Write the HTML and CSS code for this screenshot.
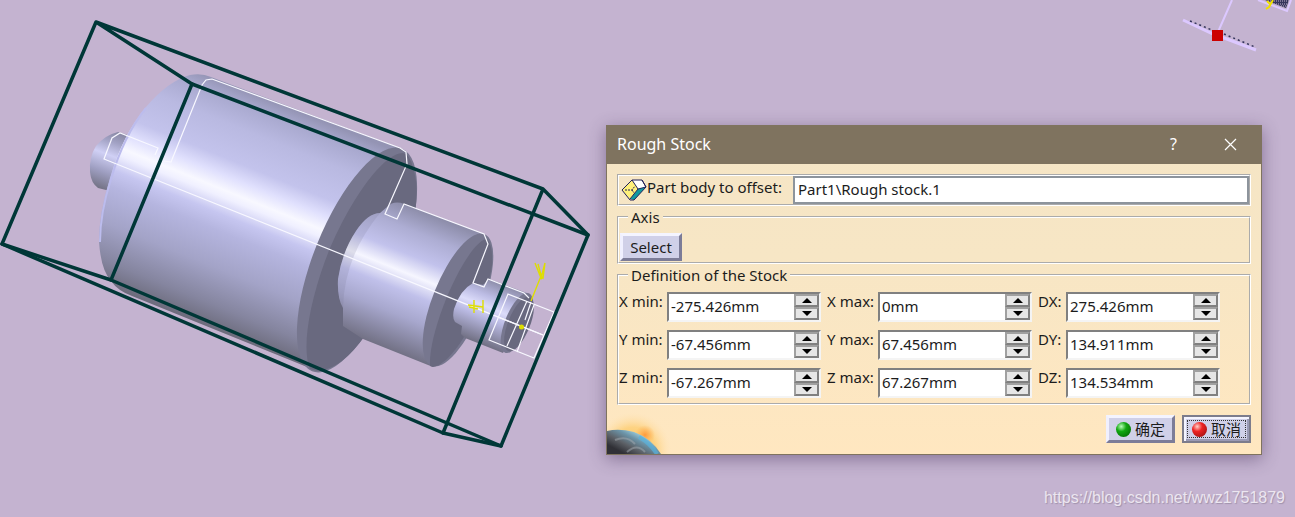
FILE: index.html
```html
<!DOCTYPE html>
<html lang="en">

<head>
    <meta charset="UTF-8">
    <meta name="viewport" content="width=device-width, initial-scale=1.0">
    <title>Rough Stock</title>
    <link rel="stylesheet" href="styles.css">
</head>

<body>
<main class="viewport">
    <svg class="scene" width="1295" height="517" viewBox="0 0 1295 517" aria-hidden="true">
        <defs>
            <linearGradient id="big" gradientUnits="userSpaceOnUse" x1="206" y1="74" x2="118" y2="291">
                <stop offset="0" stop-color="#9494b4"/>
                <stop offset=".06" stop-color="#a9a9cf"/>
                <stop offset=".16" stop-color="#b9b9e1"/>
                <stop offset=".3" stop-color="#c3c3ec"/>
                <stop offset=".37" stop-color="#e0e0fd"/>
                <stop offset=".43" stop-color="#f8f8ff"/>
                <stop offset=".46" stop-color="#f0f0ff"/>
                <stop offset=".53" stop-color="#c6c6f0"/>
                <stop offset=".6" stop-color="#b5b5df"/>
                <stop offset=".75" stop-color="#a3a3c7"/>
                <stop offset=".9" stop-color="#85859f"/>
                <stop offset="1" stop-color="#6b6a7a"/>
            </linearGradient>
            <linearGradient id="mid" gradientUnits="userSpaceOnUse" x1="400" y1="203" x2="348" y2="332">
                <stop offset="0" stop-color="#8e8eab"/>
                <stop offset=".15" stop-color="#adadd3"/>
                <stop offset=".32" stop-color="#c2c2ec"/>
                <stop offset=".45" stop-color="#f6f6ff"/>
                <stop offset=".58" stop-color="#c0c0ea"/>
                <stop offset=".75" stop-color="#a7a7cd"/>
                <stop offset="1" stop-color="#737286"/>
            </linearGradient>
            <linearGradient id="tip" gradientUnits="userSpaceOnUse" x1="488" y1="279" x2="465" y2="337">
                <stop offset="0" stop-color="#8e8eab"/>
                <stop offset=".25" stop-color="#bcbce4"/>
                <stop offset=".42" stop-color="#dcdcfa"/>
                <stop offset=".6" stop-color="#b9b9e2"/>
                <stop offset="1" stop-color="#737286"/>
            </linearGradient>
            <linearGradient id="knob" gradientUnits="userSpaceOnUse" x1="122" y1="132" x2="100" y2="190">
                <stop offset="0" stop-color="#84849f"/>
                <stop offset=".2" stop-color="#a2a2c4"/>
                <stop offset=".42" stop-color="#d0d0f5"/>
                <stop offset=".7" stop-color="#9f9fc2"/>
                <stop offset="1" stop-color="#706f80"/>
            </linearGradient>
        </defs>

        <!-- turned part -->
        <path fill="url(#knob)" d="M128 135L118 132Q105 135 96 146Q89 157 90 172Q91 183 98 188L106 190L130 190Z"/>
        <path fill="url(#big)" d="M400 148L211 77Q202 73 190 75Q168 81 146 107Q123 134 110 178Q99 213 99 242Q101 270 111 281Q118 291 132 296L317 371L360 260Z"/>
        <path fill="none" stroke="#bcbced" stroke-width="2" d="M146 108Q124 135 111 179Q100 213 100 242"/>
        <ellipse cx="357" cy="260" rx="43" ry="120" transform="rotate(22 357 260)" fill="#77778f"/>
        <path fill="#69697f" d="M403 153C382 153 346 206 325 261C308 308 302 350 310 369L317 371C346 370 374 330 395 279C414 232 422 193 413 168Q410 154 403 153Z"/>
        <path fill="url(#mid)" d="M484 234L404 204Q394 200 387 207L380 213Q368 213 356 231Q342 252 338 279Q337 298 343 308L343 326L363 339L433 367L470 300Z"/>
        <path fill="#77778f" fill-opacity=".18" d="M380 213Q368 213 356 231Q342 252 338 279Q337 298 343 308Q344 257 380 213Z"/>
        <ellipse cx="458" cy="300" rx="25" ry="71" transform="rotate(22 458 300)" fill="#77778f"/>
        <path fill="#69697f" d="M486 239C466 244 428 329 430 366L433 367C455 364 487 302 492 265Q493 247 488 240Z"/>
        <path fill="url(#tip)" d="M527 293L489 279L483 285L473 283Q460 290 454 309Q452 318 455 322L462 326L461 334L465 338L503 353L520 322Z"/>
        <ellipse cx="517" cy="323" rx="12" ry="32" transform="rotate(22 517 323)" fill="#77778f"/>
        <ellipse cx="519" cy="324" rx="11" ry="29" transform="rotate(22 519 324)" fill="#69697f"/>

        <!-- sketch profile -->
        <g fill="none" stroke="#f8f8ff" stroke-width="1.200">
            <path d="M543 335L104 159L112 138L120 133L158 148L155 155M164 161L171 162L202 85L206 80L212 79L400 148L406 152L407 164L385 214L397 219L404 204L484 234L488 244L473 283L484 287L488 279L524 293L529 298"/>
            <path d="M508 294L554 312L534 358L489 340ZM527 301L507 346M531 302L525 320M534 305L517 352M498 317L543 335"/>
        </g>

        <!-- stock box -->
        <g fill="none" stroke="#003737" stroke-width="3.500" stroke-linejoin="round" stroke-linecap="round">
            <path d="M96 22L2 244L111 280L192 84ZL543 189L588 235L501 446L443 433L543 189"/>
            <path d="M192 84L588 235M2 244L443 433M111 280L501 446"/>
        </g>

        <!-- sketch axes -->
        <g fill="none" stroke="#dede00" stroke-width="1.400">
            <path d="M531 301L541 276M535 263L541 278L545 263M538 264L542 279M545 263L543 278L539 274"/>
            <path d="M474 300V313M483 300V313M468 305L483 307M469 307L478 309"/>
        </g>
        <circle cx="521.500" cy="327" r="2.500" fill="#dede00"/>

        <!-- compass -->
        <path fill="none" stroke="#dcc8ff" stroke-width="3" d="M1183 20L1211 33L1256 50"/>
        <path fill="none" stroke="#dcc8ff" stroke-width="2" d="M1218 32L1232 0M1258 0L1287 11L1291 0"/>
        <path fill="none" stroke="#33335c" stroke-width="1.500" stroke-dasharray="2 3" d="M1190 21L1212 30M1224 34L1255 47"/>
        <path fill="#36365c" d="M1265 0H1289L1286 8Z"/>
        <path fill="none" stroke="#c4b3d0" stroke-width="1" stroke-dasharray="1 1" d="M1268 1H1289M1274 4H1287M1281 6H1287"/>
        <path fill="none" stroke="#f0e000" stroke-width="2" d="M1267 1L1270 4M1273 0L1269 7L1266 9"/>
        <rect x="1212" y="30" width="11" height="11" fill="#cc0000"/>
    </svg>

    <form class="dialog" aria-labelledby="dialog-title">
        <header class="title-bar">
            <span id="dialog-title" class="title">Rough Stock</span>
            <button type="button" class="title-button" aria-label="Help">?</button>
            <button type="button" class="title-button" aria-label="Close">
                <svg width="13" height="13" viewBox="0 0 13 13"><path d="M1 1L12 12M12 1L1 12" fill="none" stroke="#fff" stroke-width="1.200"/></svg>
            </button>
        </header>

        <div class="content">
            <div class="part-row">
                <svg class="part-icon" width="26" height="22" viewBox="0 0 26 22" aria-hidden="true">
                    <path d="M11 1H21L25 8L16 11Z" fill="#fff"/>
                    <path d="M9 20L17 10L25 8L13 21Z" fill="#0f99a0"/>
                    <path d="M11 1L17 10L9 20L1 11Z" fill="#fff07a"/>
                    <path d="M11 1H21L25 8L13 21H9L1 11ZM11 1L17 10L9 20M21 1L25 8L17 10" fill="none" stroke="#202058"/>
                    <path d="M4 11H11L14 7M11 11L13 14" fill="none" stroke="#202058" stroke-dasharray="2 1"/>
                </svg>
                <label for="part-body">Part body to offset:</label>
                <input type="text" id="part-body" class="part-input" value="Part1\Rough stock.1">
            </div>

            <fieldset class="group">
                <legend>Axis</legend>
                <button type="button" class="button select-button">Select</button>
            </fieldset>

            <fieldset class="group">
                <legend>Definition of the Stock</legend>
                <div class="stock-grid">
                    <label for="x-min">X min:</label>
                    <div class="spinner">
                        <input type="text" id="x-min" value="-275.426mm">
                        <button type="button" class="step up" aria-label="Increase X min"></button>
                        <button type="button" class="step down" aria-label="Decrease X min"></button>
                    </div>
                    <label for="x-max">X max:</label>
                    <div class="spinner">
                        <input type="text" id="x-max" value="0mm">
                        <button type="button" class="step up" aria-label="Increase X max"></button>
                        <button type="button" class="step down" aria-label="Decrease X max"></button>
                    </div>
                    <label for="dx">DX:</label>
                    <div class="spinner">
                        <input type="text" id="dx" value="275.426mm">
                        <button type="button" class="step up" aria-label="Increase DX"></button>
                        <button type="button" class="step down" aria-label="Decrease DX"></button>
                    </div>

                    <label for="y-min">Y min:</label>
                    <div class="spinner">
                        <input type="text" id="y-min" value="-67.456mm">
                        <button type="button" class="step up" aria-label="Increase Y min"></button>
                        <button type="button" class="step down" aria-label="Decrease Y min"></button>
                    </div>
                    <label for="y-max">Y max:</label>
                    <div class="spinner">
                        <input type="text" id="y-max" value="67.456mm">
                        <button type="button" class="step up" aria-label="Increase Y max"></button>
                        <button type="button" class="step down" aria-label="Decrease Y max"></button>
                    </div>
                    <label for="dy">DY:</label>
                    <div class="spinner">
                        <input type="text" id="dy" value="134.911mm">
                        <button type="button" class="step up" aria-label="Increase DY"></button>
                        <button type="button" class="step down" aria-label="Decrease DY"></button>
                    </div>

                    <label for="z-min">Z min:</label>
                    <div class="spinner">
                        <input type="text" id="z-min" value="-67.267mm">
                        <button type="button" class="step up" aria-label="Increase Z min"></button>
                        <button type="button" class="step down" aria-label="Decrease Z min"></button>
                    </div>
                    <label for="z-max">Z max:</label>
                    <div class="spinner">
                        <input type="text" id="z-max" value="67.267mm">
                        <button type="button" class="step up" aria-label="Increase Z max"></button>
                        <button type="button" class="step down" aria-label="Decrease Z max"></button>
                    </div>
                    <label for="dz">DZ:</label>
                    <div class="spinner">
                        <input type="text" id="dz" value="134.534mm">
                        <button type="button" class="step up" aria-label="Increase DZ"></button>
                        <button type="button" class="step down" aria-label="Decrease DZ"></button>
                    </div>
                </div>
            </fieldset>
        </div>

        <footer class="actions">
            <svg class="planet" width="64" height="44" viewBox="0 0 64 44" aria-hidden="true">
                <defs>
                    <radialGradient id="glow" gradientUnits="userSpaceOnUse" cx="26" cy="40" r="38">
                        <stop offset="0" stop-color="#ffc04c"/>
                        <stop offset=".6" stop-color="#fdce74" stop-opacity=".8"/>
                        <stop offset="1" stop-color="#ffe3b5" stop-opacity="0"/>
                    </radialGradient>
                    <radialGradient id="sun" gradientUnits="userSpaceOnUse" cx="38" cy="25" r="10">
                        <stop offset="0" stop-color="#ff9a3c"/>
                        <stop offset="1" stop-color="#ffb050" stop-opacity="0"/>
                    </radialGradient>
                    <linearGradient id="globe" gradientUnits="userSpaceOnUse" x1="30" y1="21" x2="18" y2="44">
                        <stop offset="0" stop-color="#9fd3e4"/>
                        <stop offset=".3" stop-color="#6c94a8"/>
                        <stop offset=".65" stop-color="#5c6066"/>
                        <stop offset="1" stop-color="#303036"/>
                    </linearGradient>
                </defs>
                <rect width="64" height="44" fill="url(#glow)"/>
                <circle cx="38" cy="25" r="10" fill="url(#sun)"/>
                <path d="M0 21Q12 18 27 22Q44 28 54 44H0Z" fill="url(#globe)"/>
                <path d="M8 30Q20 25 28 34M20 42Q30 33 38 42" fill="none" stroke="#a4abb2" stroke-width="2" stroke-opacity=".5"/>
                <path d="M32 27Q43 33 50 44" fill="none" stroke="#58b0dc" stroke-width="4" stroke-opacity=".7"/>
            </svg>
            <button type="submit" class="button"><span class="ball green"></span>确定</button>
            <button type="button" class="button focused"><span class="ball red"></span>取消</button>
        </footer>
    </form>

    <a class="watermark" href="https://blog.csdn.net/wwz1751879">https://blog.csdn.net/wwz1751879</a>
</main>
</body>

</html>
```

FILE: styles.css
```css
* {
    box-sizing: border-box;
}

body {
    margin: 0;
    background-color: #c4b3d0;
    font-family: "Noto Sans", "Noto Sans CJK SC", sans-serif;
    font-size: 15px;
    line-height: 20px;
    color: #1c1c1c;
}

input,
button {
    margin: 0;
    padding: 0;
    font: inherit;
    color: inherit;
}

.viewport {
    position: relative;
    min-height: 100vh;
    overflow: hidden;
}

.scene {
    position: absolute;
    top: 0;
    left: 0;
}

/* dialog window */

.dialog {
    position: absolute;
    top: 125px;
    left: 606px;
    width: 656px;
    border: 1px solid #7f735f;
    background: linear-gradient(#f5e5c5, #f7e6c5 40%, #ffe7c0);
    box-shadow: 0 4px 16px rgba(60, 40, 80, 0.45);
}

.title-bar {
    display: flex;
    align-items: center;
    height: 38px;
    padding: 0 2px 2px 10px;
    background-color: #7f735f;
    color: #fff;
    font-size: 16px;
}

.title {
    flex: 1;
}

.title-button {
    display: flex;
    align-items: center;
    justify-content: center;
    width: 57px;
    height: 36px;
    border: none;
    background: none;
}

.content {
    padding: 10px 10px 0;
}

.part-row {
    display: flex;
    height: 32px;
    padding-left: 2px;
    border: 2px groove #fff;
}

.part-icon {
    flex: none;
    margin-top: 3px;
}

.part-row label {
    width: 146px;
    line-height: 22px;
    white-space: nowrap;
}

.part-input {
    flex: 1;
    min-width: 0;
    padding: 0 3px 2px;
    border: 2px solid #8d949c;
    background-color: #fff;
}

.group {
    margin: 2px 0 0;
    padding: 0;
    min-width: 0;
    border: 2px groove #fff;
}

.group legend {
    height: 18px;
    margin-left: 9px;
    padding: 0 3px;
    line-height: 18px;
}

/* buttons */

.button {
    display: flex;
    align-items: center;
    justify-content: center;
    gap: 4px;
    min-width: 69px;
    height: 28px;
    border: 3px solid;
    border-color: #f4f4ff #7c7c98 #7c7c98 #f0f0ff;
    background-color: #d0d0e8;
}

.select-button {
    min-width: 62px;
    margin: 7px 0 1px 1px;
}

.focused {
    border: 2px solid #7c7c8c;
    box-shadow: inset 2px 2px #f4f4ff, inset -2px -2px #9a9ab4;
    outline: 1px dotted #333;
    outline-offset: -6px;
}

.ball {
    width: 15px;
    height: 15px;
    border-radius: 50%;
}

.green {
    background: radial-gradient(circle at 35% 30%, #b8ffb8 0, #12a812 35%, #005c00 100%);
}

.red {
    background: radial-gradient(circle at 35% 30%, #ffd0c8 0, #ee2222 35%, #8a0c0c 100%);
}

/* stock values */

.stock-grid {
    display: grid;
    grid-template-columns: 48px 160px 51px 160px 28px 154px;
    row-gap: 8px;
    padding: 8px 0 5px;
}

.stock-grid label {
    line-height: 18px;
    white-space: nowrap;
}

.spinner {
    display: grid;
    grid-template-columns: 1fr 25px;
    grid-template-rows: 13px 13px;
    width: 154px;
    border: 2px solid;
    border-color: #808080 #f4f4f4 #f4f4f4 #808080;
    background-color: #fff;
}

.spinner input {
    grid-row: 1 / 3;
    min-width: 0;
    padding: 0 0 2px 2px;
    border: none;
    background: none;
}

.step {
    display: flex;
    align-items: center;
    justify-content: center;
    border: 2px solid;
    border-color: #a0a0a0 #808080 #808080 #a0a0a0;
    background-color: #e6e6e6;
}

.step::before {
    content: "";
    border-left: 5px solid transparent;
    border-right: 5px solid transparent;
}

.up::before {
    border-bottom: 5px solid #000;
}

.down::before {
    border-top: 5px solid #000;
}

/* bottom bar */

.actions {
    position: relative;
    display: flex;
    justify-content: flex-end;
    gap: 7px;
    padding: 10px 10px 11px;
}

.planet {
    position: absolute;
    left: 0;
    bottom: 0;
}

.watermark {
    position: absolute;
    right: 10px;
    bottom: 9px;
    font-family: "Liberation Sans", sans-serif;
    font-size: 16px;
    color: #ece6f0;
    text-decoration: none;
    text-shadow: 1px 1px 1px #a092ac;
}
```
